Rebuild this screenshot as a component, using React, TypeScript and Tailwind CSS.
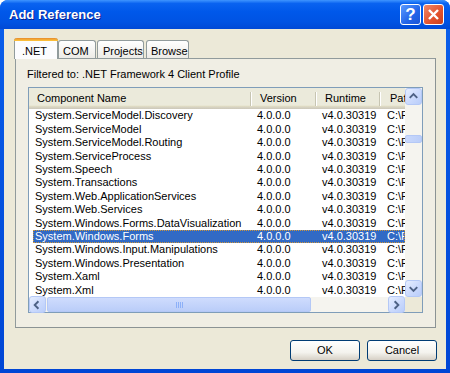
import React from 'react';

const rows = [
  'System.ServiceModel.Discovery',
  'System.ServiceModel',
  'System.ServiceModel.Routing',
  'System.ServiceProcess',
  'System.Speech',
  'System.Transactions',
  'System.Web.ApplicationServices',
  'System.Web.Services',
  'System.Windows.Forms.DataVisualization',
  'System.Windows.Forms',
  'System.Windows.Input.Manipulations',
  'System.Windows.Presentation',
  'System.Xaml',
  'System.Xml',
];

const SELECTED = 'System.Windows.Forms';

function Arrow({ dir }: { dir: 'up' | 'down' | 'left' | 'right' }) {
  const pts = {
    up: '4,9 8,5 12,9',
    down: '4,6 8,10 12,6',
    left: '9,4 5,8 9,12',
    right: '6,4 10,8 6,12',
  }[dir];
  return (
    <svg width="16" height="16" viewBox="0 0 16 16">
      <polyline points={pts} fill="none" stroke="#4D6185" strokeWidth="2" />
    </svg>
  );
}

function ScrollButton({ dir }: { dir: 'up' | 'down' | 'left' | 'right' }) {
  return (
    <div className="w-[17px] h-[17px] shrink-0 flex items-center justify-center rounded-[3px] border border-[#B4C8F6] bg-[linear-gradient(135deg,#E6EEFF_0%,#CDDBFD_50%,#B9CDFA_100%)]">
      <Arrow dir={dir} />
    </div>
  );
}

function HeaderCell({ label, className }: { label: string; className: string }) {
  return (
    <div className={`flex items-center shrink-0 ${className}`}>
      <span className="flex-1 pl-[8px] whitespace-nowrap overflow-hidden">{label}</span>
      <div className="w-[1px] h-[14px] bg-[#C7C5B2]" />
      <div className="w-[1px] h-[14px] bg-white" />
    </div>
  );
}

export default function App() {
  return (
    <div className="w-[450px] h-[373px] bg-white" style={{ fontFamily: '"Liberation Sans", Arial, sans-serif' }}>
      <div className="w-[450px] h-[373px] flex flex-col rounded-t-[8px] overflow-hidden bg-[linear-gradient(to_bottom,#0A5FEB,#0046D5)]">
        {/* Title bar */}
        <div className="h-[29px] shrink-0 flex items-center pl-[9px] pr-[6px] bg-[linear-gradient(to_bottom,#3F95FF_0%,#0A63F0_12%,#0058EA_40%,#0053E3_75%,#0049D6_100%)]">
          <span className="flex-1 text-white font-bold text-[13px] [text-shadow:1px_1px_0_#0A1E8C]">Add Reference</span>
          <div className="flex gap-[2px]">
            <div className="w-[21px] h-[21px] rounded-[3px] border border-white flex items-center justify-center bg-[linear-gradient(135deg,#5A9BFF,#2264E8_60%,#1C55D6)] text-white font-bold text-[17px] leading-none">
              ?
            </div>
            <div className="w-[21px] h-[21px] rounded-[3px] border border-white flex items-center justify-center bg-[linear-gradient(135deg,#F0886A,#E2512C_60%,#C9401E)]">
              <svg width="13" height="13" viewBox="0 0 13 13">
                <path d="M2 2 L11 11 M11 2 L2 11" stroke="white" strokeWidth="2.4" />
              </svg>
            </div>
          </div>
        </div>

        {/* Client area */}
        <div className="flex-1 mx-[4px] mb-[4px] bg-[#ECE9D8] flex flex-col text-[11px] text-black">
          {/* Tabs */}
          <div className="flex items-end h-[20px] mt-[9px] pl-[10px]">
            <div className="relative z-10 w-[44px] h-[21px] mb-[-1px] bg-[#FCFCFE] border-x border-[#919B9C] rounded-t-[3px] flex flex-col">
              <div className="h-[3px] rounded-t-[3px] bg-[linear-gradient(to_bottom,#E68B2C,#FFC73C)] mx-[-1px]" />
              <span className="pl-[7px] pt-[2px]">.NET</span>
            </div>
            <div className="w-[38px] h-[18px] border border-b-0 border-[#919B9C] rounded-t-[3px] bg-[linear-gradient(to_bottom,#FFFFFF,#ECEBE6)] pl-[4px] pt-[2px]">COM</div>
            <div className="ml-[1px] w-[47px] h-[18px] border border-b-0 border-[#919B9C] rounded-t-[3px] bg-[linear-gradient(to_bottom,#FFFFFF,#ECEBE6)] pl-[5px] pt-[2px]">Projects</div>
            <div className="ml-[2px] w-[43px] h-[18px] border border-b-0 border-[#919B9C] rounded-t-[3px] bg-[linear-gradient(to_bottom,#FFFFFF,#ECEBE6)] pl-[4px] pt-[2px]">Browse</div>
          </div>

          {/* Tab panel */}
          <div className="ml-[11px] w-[421px] h-[270px] border border-[#919B9C] border-r-[#8B9394] border-b-[#8B9394] bg-[#F0EEE4] flex flex-col">
            <div className="pl-[11px] pt-[7px] h-[28px]">Filtered to: .NET Framework 4 Client Profile</div>

            {/* List view */}
            <div className="ml-[12px] w-[395px] h-[226px] border border-[#7F9DB9] bg-white grid grid-cols-[1fr_17px] grid-rows-[1fr_15px]">
              <div className="overflow-hidden flex flex-col">
                <div className="flex h-[21px] shrink-0 bg-[linear-gradient(to_bottom,#EBEADB_0%,#EBEADB_82%,#E2DEC3_86%,#D6D2C2_92%,#CBC7B8_100%)]">
                  <HeaderCell label="Component Name" className="w-[223px]" />
                  <HeaderCell label="Version" className="w-[65px]" />
                  <HeaderCell label="Runtime" className="w-[64px]" />
                  <div className="flex items-center pl-[9px] whitespace-nowrap w-[24px] overflow-hidden">Path</div>
                </div>
                {rows.map((name) => {
                  const sel = name === SELECTED;
                  return (
                    <div
                      key={name}
                      className={`flex items-center ml-[4px] h-[13.4px] whitespace-nowrap ${
                        sel ? 'bg-[#316AC5] text-white outline outline-1 outline-dotted outline-[#CE953A] -outline-offset-1' : ''
                      }`}
                    >
                      <span className="w-[219px] shrink-0 pl-[2px] overflow-hidden">{name}</span>
                      <span className="w-[65px] shrink-0 pl-[5px]">4.0.0.0</span>
                      <span className="w-[64px] shrink-0 pl-[5px]">v4.0.30319</span>
                      <span className="pl-[6px] w-[24px] overflow-hidden">C:\Program</span>
                    </div>
                  );
                })}
              </div>

              {/* Vertical scrollbar */}
              <div className="flex flex-col bg-[#F5F4EF]">
                <ScrollButton dir="up" />
                <div className="h-[30px]" />
                <div className="h-[8px] rounded-[2px] border border-[#B4C8F6] bg-[linear-gradient(to_right,#C9D8FC,#BBCEF9)]" />
                <div className="flex-1" />
                <ScrollButton dir="down" />
              </div>

              {/* Horizontal scrollbar */}
              <div className="flex bg-[#F5F4EF] h-[15px] items-center">
                <ScrollButton dir="left" />
                <div className="ml-[1px] w-[264px] h-[15px] rounded-[2px] border border-[#B4C8F6] bg-[linear-gradient(to_bottom,#CFDCFD,#BACDF9)] flex items-center justify-center gap-[1px]">
                  {[0, 1, 2, 3].map((i) => (
                    <div key={i} className="w-[1px] h-[6px] bg-[#8CB0F8]" />
                  ))}
                </div>
                <div className="flex-1" />
                <ScrollButton dir="right" />
              </div>

              <div className="bg-[#ECE9D8]" />
            </div>
          </div>

          {/* Buttons */}
          <div className="flex justify-end gap-[7px] mt-[12px] mr-[9px]">
            <div className="w-[70px] h-[21px] rounded-[3px] border border-[#003C74] bg-[linear-gradient(to_bottom,#FFFFFF,#F4F3EE_60%,#D6D0C5)] flex items-center justify-center">OK</div>
            <div className="w-[70px] h-[21px] rounded-[3px] border border-[#003C74] bg-[linear-gradient(to_bottom,#FFFFFF,#F4F3EE_60%,#D6D0C5)] flex items-center justify-center">Cancel</div>
          </div>
        </div>
      </div>
    </div>
  );
}
